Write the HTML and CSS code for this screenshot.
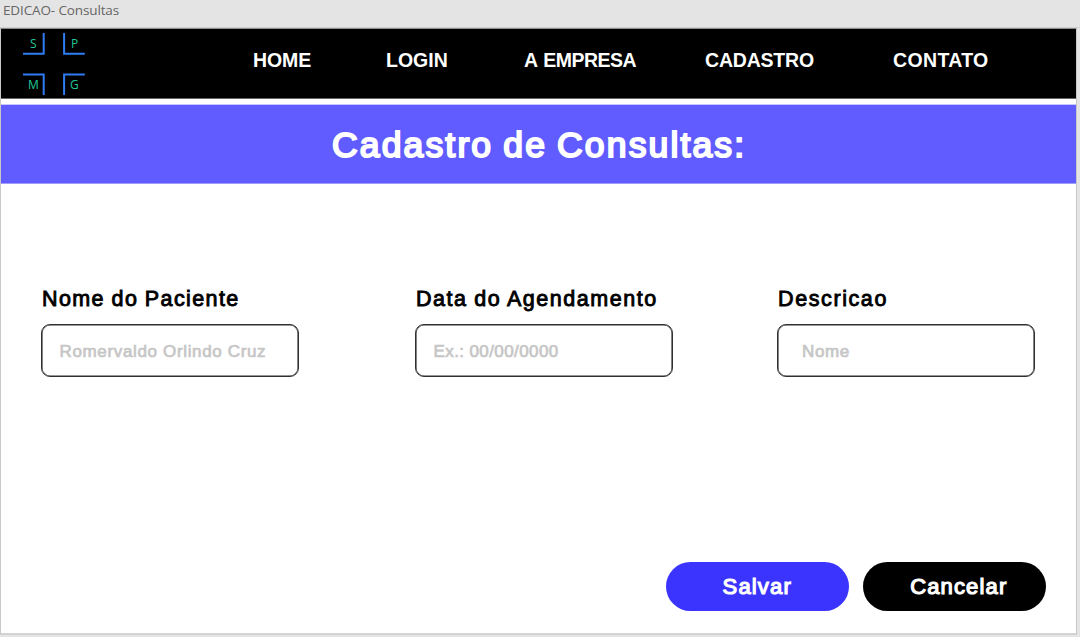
FILE: index.html
```html
<!DOCTYPE html>
<html lang="pt-BR">
<head>
<meta charset="utf-8">
<title>EDICAO- Consultas</title>
<link rel="stylesheet" href="styles.css">
</head>
<body>
<div class="artboard-name">EDICAO- Consultas</div>
<main class="artboard">
  <header class="header">
    <svg class="logo" width="63" height="63" viewBox="0 0 63 63">
      <path class="logo-lines" d="M0 20.7H20.7V0M61.8 20.7H41.1V0M0 41.5H20.7V62M61.8 41.5H41.1V62"/>
      <text x="6.9" y="14.6">S</text>
      <text x="48" y="14.6">P</text>
      <text x="4.9" y="55.6">M</text>
      <text x="47" y="55.6">G</text>
    </svg>
    <nav class="nav">
      <a class="nav-home">HOME</a>
      <a class="nav-login">LOGIN</a>
      <a class="nav-company">A EMPRESA</a>
      <a class="nav-register">CADASTRO</a>
      <a class="nav-contact">CONTATO</a>
    </nav>
  </header>
  <h1 class="banner"><span>Cadastro de Consultas:</span></h1>
  <form class="form">
    <div class="fields">
      <label class="field"><span class="label label-patient">Nome do Paciente</span><span class="input input-patient">Romervaldo Orlindo Cruz</span></label>
      <label class="field"><span class="label label-date">Data do Agendamento</span><span class="input input-date">Ex.: 00/00/0000</span></label>
      <label class="field"><span class="label label-description">Descricao</span><span class="input input-description">Nome</span></label>
    </div>
    <div class="actions">
      <button class="button save" type="button">Salvar</button>
      <button class="button cancel" type="button">Cancelar</button>
    </div>
  </form>
</main>
</body>
</html>
```
FILE: styles.css
```css
* { box-sizing: border-box; }
body {
  margin: 0;
  height: 637px;
  overflow: hidden;
  background: #e4e4e4;
  font-family: "Liberation Sans", Arial, sans-serif;
  font-weight: 400;
}
.artboard-name {
  height: 28px;
  padding: 1px 0 0 3px;
  border-bottom: 1px solid #cfcfcf;
  font: 400 13.5px/19px "Open Sans", sans-serif;
  letter-spacing: -0.13px;
  color: #666;
}
.artboard {
  width: 1077px;
  height: 607px;
  border: 1px solid #c8c8c8;
  border-top-color: #8c8c8c;
  border-bottom: 2px solid #d3d3d3;
  background: #fff;
}
.header {
  display: flex;
  height: 70px;
  padding: 4px 0 0 22px;
  border-bottom: 1px solid #666;
  background: #000;
}
.logo { flex: none; }
.logo-lines { fill: none; stroke: #2e7df5; stroke-width: 2; }
.logo text { font: 400 12px "Open Sans", sans-serif; fill: #20c997; }
.nav {
  display: flex;
  padding: 16px 0 0 167px;
  font-size: 19.5px;
  font-weight: 700;
  line-height: 23px;
  color: #fff;
  white-space: nowrap;
}
.nav-home { width: 133px; letter-spacing: -0.1px; }
.nav-login { width: 138px; }
.nav-company { width: 181px; letter-spacing: -0.5px; word-spacing: 1.4px; }
.nav-register { width: 188px; letter-spacing: -0.2px; }
.nav-contact { letter-spacing: 0.35px; }
.banner {
  height: 80px;
  margin: 5px 0 0;
  padding: 20px 0 0 331px;
  border-top: 1px solid #c8c6ff;
  border-bottom: 1px solid #a09cff;
  background: #615cff;
  color: #fff;
  font-size: 35.5px;
  font-weight: 400;
  line-height: 41px;
  letter-spacing: 2.15px;
  word-spacing: -2px;
  -webkit-text-stroke: 2px #fff;
  white-space: nowrap;
}
.form { padding: 102px 0 0 40px; }
.fields { display: grid; grid-template-columns: 374px 362px 258px; }
.label {
  display: block;
  height: 38px;
  padding: 1px 0 0 1px;
  font-size: 21.5px;
  line-height: 25px;
  letter-spacing: 1.4px;
  word-spacing: -0.8px;
  -webkit-text-stroke: 0.9px #000;
  white-space: nowrap;
}
.label-date { letter-spacing: 1.55px; }
.label-description { letter-spacing: 1.6px; }
.input {
  display: block;
  width: 258px;
  height: 53px;
  padding: 17px 0 0 17.5px;
  border: 1px solid #303030;
  box-shadow: inset 0 0 0 0.6px #303030;
  border-radius: 9px;
  background: #fff;
  color: #c6c6c6;
  font-size: 17px;
  line-height: 19px;
  letter-spacing: 0.65px;
  -webkit-text-stroke: 0.7px #c6c6c6;
  white-space: nowrap;
}
.input-date { letter-spacing: 0.4px; }
.input-description { padding-left: 24px; }
.actions { display: flex; gap: 14.5px; padding: 185px 0 0 625px; }
.button {
  width: 182.5px;
  height: 48.5px;
  padding: 1px 0 0;
  border: 0;
  border-radius: 25px;
  color: #fff;
  font: 400 22px/48px "Liberation Sans", Arial, sans-serif;
  letter-spacing: 1.15px;
  -webkit-text-stroke: 1.2px #fff;
}
.save { background: #3b34ff; }
.cancel { padding-left: 9px; background: #000; }
```
